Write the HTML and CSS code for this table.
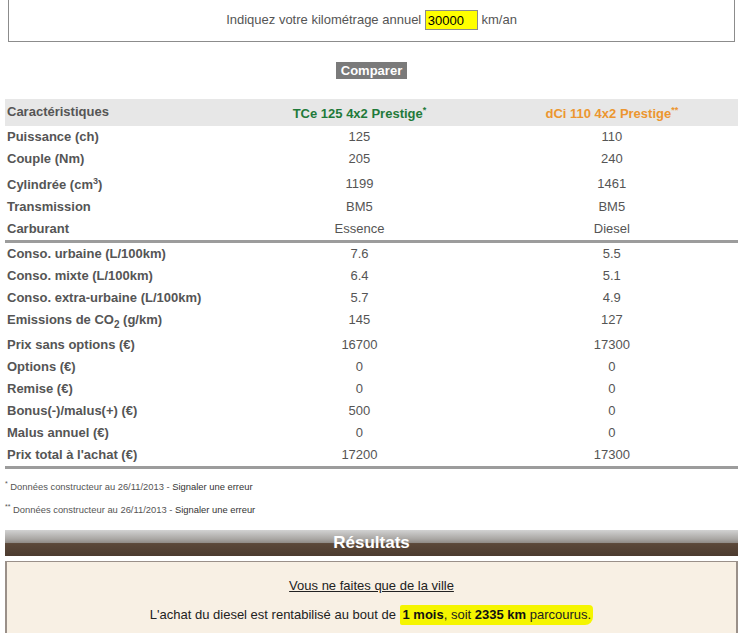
FILE: index.html
```html
<!DOCTYPE html>
<html lang="fr">
<head>
<meta charset="utf-8">
<title>Comparateur</title>
<link rel="stylesheet" href="styles.css">
</head>
<body>
<div class="page">
  <div class="km-box">
    Indiquez votre kilométrage annuel <input class="km-input" type="text" value="30000"> km/an
  </div>
  <div class="actions"><button class="btn" type="button">Comparer</button></div>

  <table class="compare">
    <colgroup><col class="c-label"><col class="c-val"><col class="c-val"></colgroup>
    <thead>
      <tr class="head">
        <th class="label">Caractéristiques</th>
        <th class="v1">TCe 125 4x2 Prestige<sup class="star">*</sup></th>
        <th class="v2">dCi 110 4x2 Prestige<sup class="star">**</sup></th>
      </tr>
    </thead>
    <tbody class="group">
      <tr><th class="label">Puissance (ch)</th><td>125</td><td>110</td></tr>
      <tr><th class="label">Couple (Nm)</th><td>205</td><td>240</td></tr>
      <tr class="tall-top"><th class="label">Cylindrée (cm<sup>3</sup>)</th><td>1199</td><td>1461</td></tr>
      <tr><th class="label">Transmission</th><td>BM5</td><td>BM5</td></tr>
      <tr class="last"><th class="label">Carburant</th><td>Essence</td><td>Diesel</td></tr>
    </tbody>
    <tbody class="group">
      <tr><th class="label">Conso. urbaine (L/100km)</th><td>7.6</td><td>5.5</td></tr>
      <tr><th class="label">Conso. mixte (L/100km)</th><td>6.4</td><td>5.1</td></tr>
      <tr><th class="label">Conso. extra-urbaine (L/100km)</th><td>5.7</td><td>4.9</td></tr>
      <tr class="tall-bottom"><th class="label">Emissions de CO<sub>2</sub> (g/km)</th><td>145</td><td>127</td></tr>
      <tr><th class="label">Prix sans options (€)</th><td>16700</td><td>17300</td></tr>
      <tr><th class="label">Options (€)</th><td>0</td><td>0</td></tr>
      <tr><th class="label">Remise (€)</th><td>0</td><td>0</td></tr>
      <tr><th class="label">Bonus(-)/malus(+) (€)</th><td>500</td><td>0</td></tr>
      <tr><th class="label">Malus annuel (€)</th><td>0</td><td>0</td></tr>
      <tr class="last"><th class="label">Prix total à l'achat (€)</th><td>17200</td><td>17300</td></tr>
    </tbody>
  </table>

  <div class="notes">
    <p class="note"><sup>*</sup> Données constructeur au 26/11/2013 - <a class="report" href="#">Signaler une erreur</a></p>
    <p class="note"><sup>**</sup> Données constructeur au 26/11/2013 - <a class="report" href="#">Signaler une erreur</a></p>
  </div>

  <div class="results-bar">Résultats</div>
  <div class="results-box">
    <p class="scenario">Vous ne faites que de la ville</p>
    <p class="verdict">L'achat du diesel est rentabilisé au bout de <span class="mark"><b>1 mois</b>, soit <b>2335 km</b> parcourus.</span></p>
  </div>
</div>
</body>
</html>
```
FILE: styles.css
```css
html, body {
  margin: 0;
  padding: 0;
  background: #fff;
}
body {
  font-family: "Liberation Sans", Arial, sans-serif;
  font-size: 13px;
  color: #555;
}
.page {
  padding: 0 11px 0 5px;
}
.km-box {
  margin: 0 3px 0 3px;
  height: 42px;
  box-sizing: border-box;
  border: 1px solid #8c8c8c;
  border-top: none;
  padding-top: 10px;
  text-align: center;
  line-height: 20px;
  color: #555;
}
.km-input {
  box-sizing: border-box;
  width: 53px;
  height: 20px;
  margin: 0;
  padding: 0 2px;
  border: 1px solid #8c8c8c;
  background: #ffff00;
  font-family: "Liberation Sans", Arial, sans-serif;
  font-size: 13px;
  color: #000;
  vertical-align: top;
}
.actions {
  text-align: center;
  padding-top: 20px;
  height: 17px;
  padding-bottom: 20px;
}
.btn {
  display: inline-block;
  margin: 0;
  border: none;
  background: #7a7a7a;
  color: #fff;
  font-family: "Liberation Sans", Arial, sans-serif;
  font-weight: bold;
  font-size: 13px;
  line-height: 17px;
  height: 17px;
  padding: 0 5px;
  vertical-align: top;
}
.compare {
  width: 733px;
  border-collapse: separate;
  border-spacing: 0;
  table-layout: fixed;
}
.c-label { width: 228px; }
.c-val { width: 252px; }
.compare th, .compare td {
  padding: 0 2px;
  height: 22px;
  line-height: 16px;
  vertical-align: middle;
  text-align: center;
  font-weight: normal;
  color: #555;
  white-space: nowrap;
}
.compare th.label {
  text-align: left;
  font-weight: bold;
}
.head th {
  background: #e7e7e7;
}
.head th.label {
  height: 25px;
  padding-bottom: 2px;
}
.head th.v1, .head th.v2 {
  height: 24px;
  padding-top: 3px;
  font-weight: bold;
}
.head th.v1 { color: #1f7a3a; }
.head th.v2 { color: #ec9630; }
.star {
  font-size: 8px;
  line-height: 0;
  vertical-align: 5px;
}
.compare sup {
  font-size: 9px;
  line-height: 0;
}
.compare sub {
  font-size: 10px;
  line-height: 0;
}
.tall-top th {
  height: 22px;
  padding-top: 4px;
}
.tall-top td {
  height: 24px;
  padding-top: 2px;
}
.tall-bottom th, .tall-bottom td {
  height: 22px;
  padding-bottom: 3px;
}
.group tr.last th, .group tr.last td {
  border-bottom: 3px solid #9c9c9c;
}
.notes {
  padding-top: 6px;
}
.note {
  margin: 0;
  line-height: 23px;
  font-size: 9.4px;
  color: #555;
}
.note sup {
  font-size: 7px;
  line-height: 0;
  vertical-align: 4px;
}
.report {
  color: #333;
  text-decoration: none;
}
.results-bar {
  margin-top: 9px;
  height: 26px;
  line-height: 26px;
  text-align: center;
  color: #fff;
  font-weight: bold;
  font-size: 17px;
  background: linear-gradient(to bottom, #d2d2d2 0%, #a9a6a3 35%, #8f8a85 50%, #5b4839 52%, #4c3b2f 100%);
}
.results-box {
  margin-top: 5px;
  height: 90px;
  border: 1px solid #9a9089;
  border-left-width: 2px;
  border-right-width: 2px;
  background: #f8f0e4;
  text-align: center;
  color: #222;
}
.scenario {
  margin: 15px 0 0;
  line-height: 18px;
  text-decoration: underline;
}
.verdict {
  margin: 11px 0 0;
  line-height: 18px;
}
.mark {
  background: #f5f500;
  padding: 2px 2px 3px 3px;
  border-radius: 2px 4px 8px 2px;
}
.mark b {
  color: #111;
}
```
